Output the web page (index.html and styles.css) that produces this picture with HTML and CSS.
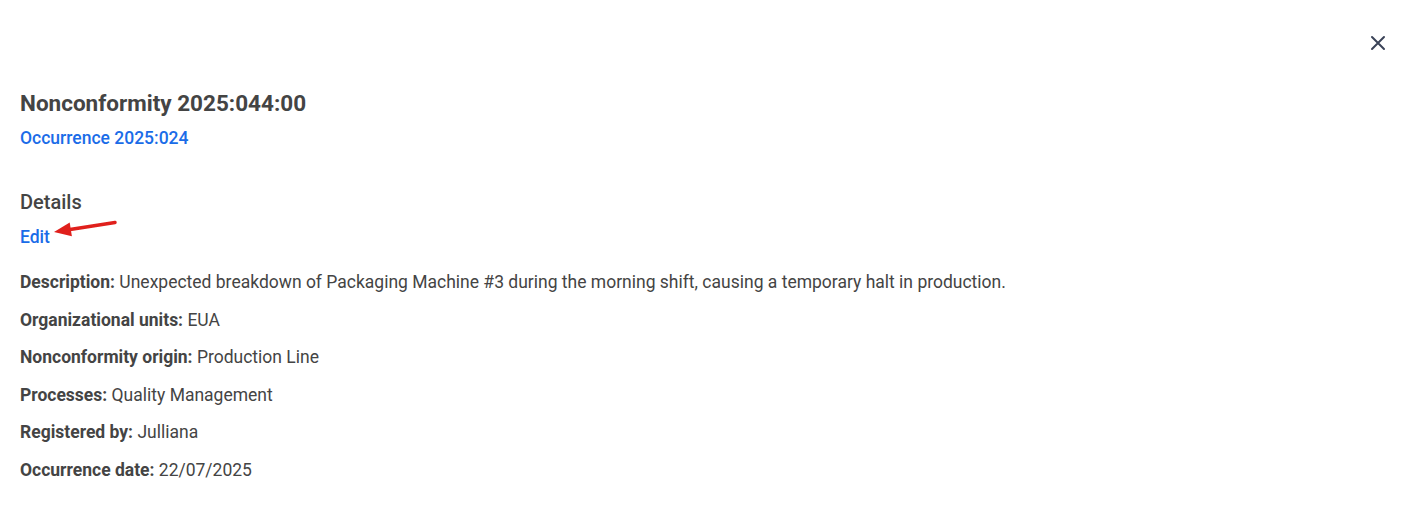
FILE: index.html
```html
<!DOCTYPE html>
<html>
<head>
<meta charset="utf-8">
<link rel="stylesheet" href="styles.css">
</head>
<body>
<div class="panel">
  <button class="close" aria-label="Close">
    <svg width="16" height="16" viewBox="0 0 16 16"><path d="M2 2 L14 14 M14 2 L2 14" stroke="#3b4358" stroke-width="2" stroke-linecap="round"/></svg>
  </button>
  <h1 class="title">Nonconformity 2025:044:00</h1>
  <a class="occ" href="#">Occurrence 2025:024</a>
  <h2 class="section">Details</h2>
  <div class="edit-row">
    <a class="edit" href="#">Edit</a>
    <svg class="arrow" width="70" height="24" viewBox="0 0 70 24"><path d="M63 3.5 L18 10.6" stroke="#e0201c" stroke-width="3.5" stroke-linecap="round"/><path d="M2 13 L17.7 3.6 L19.9 17.2 Z" fill="#e0201c"/></svg>
  </div>
  <div class="fields">
    <p class="field"><b>Description:</b> Unexpected breakdown of Packaging Machine #3 during the morning shift, causing a temporary halt in production.</p>
    <p class="field"><b>Organizational units:</b> EUA</p>
    <p class="field"><b>Nonconformity origin:</b> Production Line</p>
    <p class="field"><b>Processes:</b> Quality Management</p>
    <p class="field"><b>Registered by:</b> Julliana</p>
    <p class="field"><b>Occurrence date:</b> 22/07/2025</p>
  </div>
</div>
</body>
</html>
```
FILE: styles.css
```css
html, body { margin: 0; padding: 0; background: #fff; }
body { font-family: Roboto, "Noto Sans", sans-serif; color: #444; }
.panel { position: relative; padding: 89px 20px 20px 20px; }
.close { position: absolute; top: 35px; right: 36px; background: none; border: 0; padding: 0; width: 16px; height: 16px; cursor: pointer; }
.close svg { display: block; }
.title { margin: 0; font-size: 22.5px; font-weight: 700; line-height: 28px; color: #444; }
.occ { display: block; margin-top: 9px; font-size: 17.5px; line-height: 24px; color: #1a6ce8; text-decoration: none; font-weight: 500; }
.section { margin: 39px 0 0 0; font-size: 20px; font-weight: 500; line-height: 26px; color: #444; }
.edit-row { display: flex; align-items: flex-start; margin-top: 10px; }
.edit { font-size: 17.5px; line-height: 24px; color: #1a6ce8; text-decoration: none; font-weight: 500; }
.arrow { margin-left: 2px; margin-top: -6px; }
.fields { margin-top: 21px; }
.field { margin: 0 0 13.5px 0; font-size: 17.5px; line-height: 24px; color: #444; }
.field b { font-weight: 700; }
```
